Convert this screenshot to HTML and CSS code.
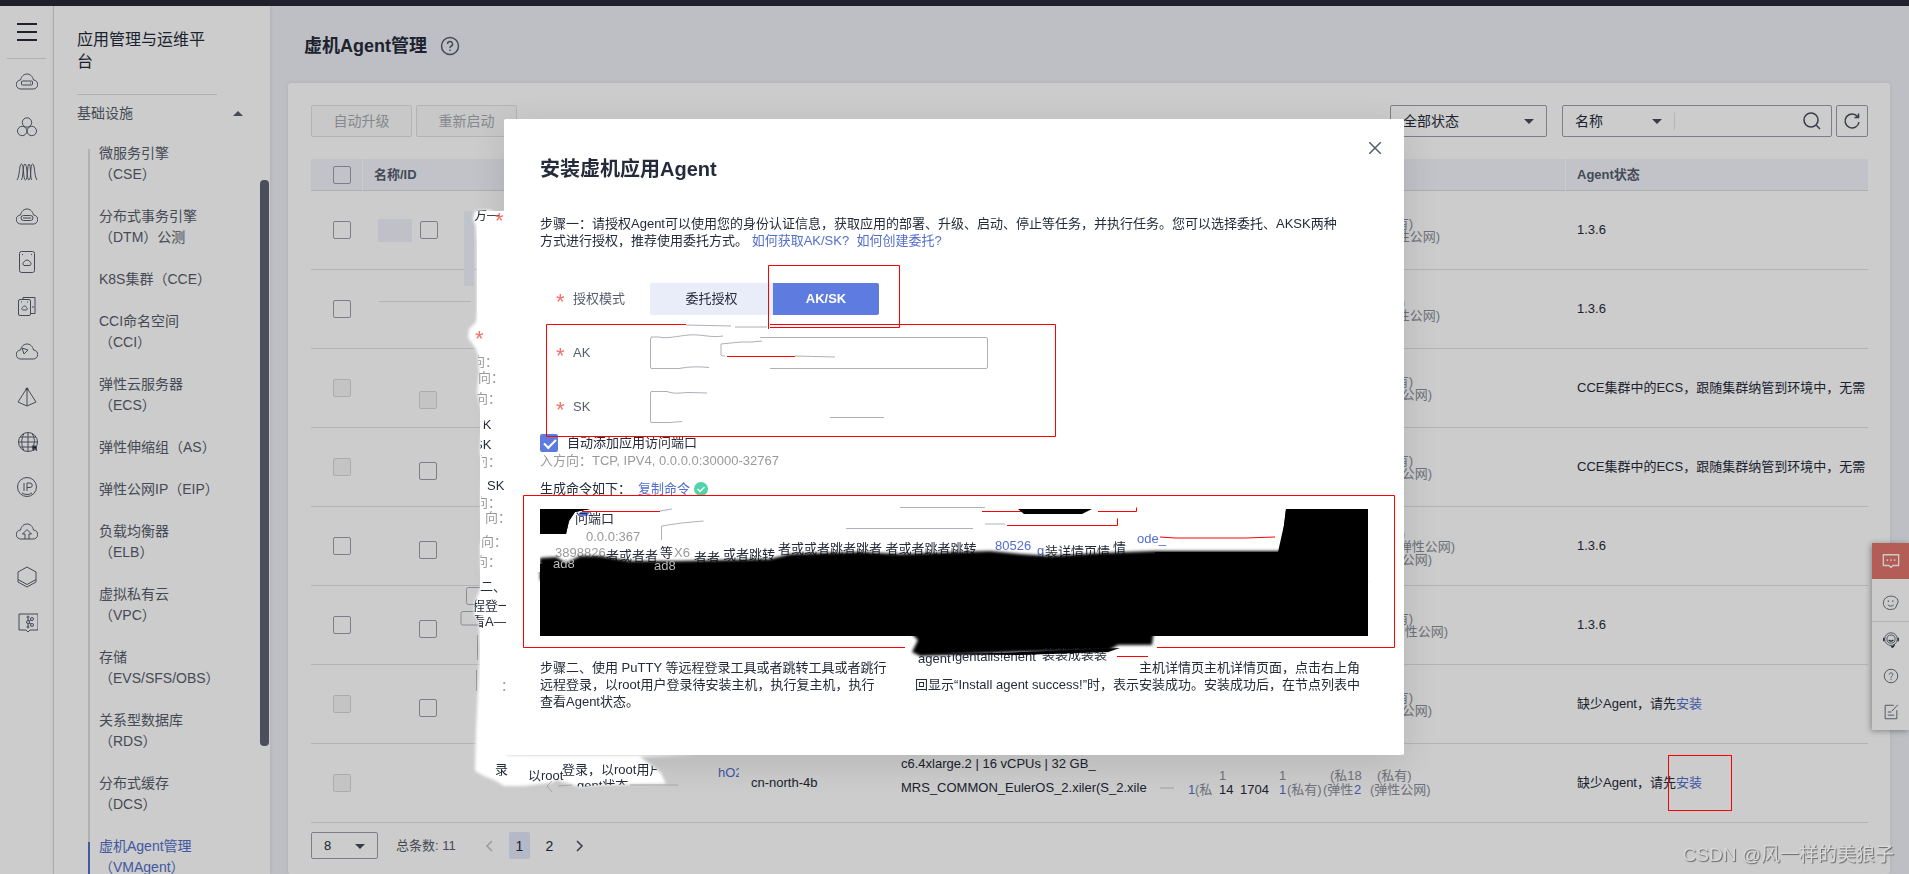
FILE: index.html
```html
<!DOCTYPE html>
<html lang="zh-CN">
  <head>
    <meta charset="UTF-8" />
    <meta name="viewport" content="width=device-width, initial-scale=1.0" />
    <title>虚机Agent管理</title>
    <link rel="stylesheet" href="styles.css">
  </head>
  <body>
    <div class="topbar"></div>
    <div class="app">
      <nav class="rail">
        <button class="menu-btn" aria-label="菜单">
          <svg width="20" height="18" viewBox="0 0 20 18"><path d="M0 1h20M0 9h20M0 17h20" stroke="#252b3a" stroke-width="2" /></svg>
        </button>
        <ul class="rail-list">
          <li><svg class="ico" viewBox="0 0 22 22"><path d="M5 18a4.500 4.500 0 0 1-.5-9C5.500 5 8 3 11 3s5.500 2 6.500 6a4.500 4.500 0 0 1-.5 9z" /><rect x="5.500" y="10" width="11" height="4" rx="1" /><path d="M14 12h1" /></svg></li>
          <li><svg class="ico" viewBox="0 0 22 22"><circle cx="11" cy="6.500" r="4.700" /><circle cx="6.200" cy="15" r="4.700" /><circle cx="15.800" cy="15" r="4.700" /></svg></li>
          <li><svg class="ico" viewBox="0 0 22 22"><path d="M1 19C4 15 3 3 5.500 3S7 19 9.500 19 11 3 13 3s1 16 3 16M5 19C7.500 19 6.500 3 9 3s1.500 16 4 16S14 3 16.500 3 18 15 21 19" /></svg></li>
          <li><svg class="ico" viewBox="0 0 22 22"><path d="M5 18a4.500 4.500 0 0 1-.5-9C5.500 5 8 3 11 3s5.500 2 6.500 6a4.500 4.500 0 0 1-.5 9z" /><rect x="5" y="9.500" width="12" height="5" rx="2.500" /><path d="M7 12h8" /></svg></li>
          <li><svg class="ico" viewBox="0 0 22 22"><rect x="3.500" y=".5" width="15" height="21" rx="2" /><path d="M8 14.500a2 2 0 0 1 0-3.500c1-2.500 5-2.500 6 0a2 2 0 0 1 0 3.500zM6 3.500h1M15 3.500h1" /></svg></li>
          <li><svg class="ico" viewBox="0 0 22 22"><rect x="2.500" y="3.500" width="12" height="16" rx="1.500" /><path d="M7 3V1.500h12v16h-4M6.500 14a1.500 1.500 0 0 1 0-2.500c1-2 3.500-2 4 0a1.500 1.500 0 0 1 0 2.500zM5 6h1M11 6h1M17 10v2" /></svg></li>
          <li><svg class="ico" viewBox="0 0 22 22"><path d="M5 18a4.500 4.500 0 0 1-.5-9C5.500 5 8 3 11 3s5.500 2 6.500 6a4.500 4.500 0 0 1-.5 9zM6 7l6 2-4 4z" /></svg></li>
          <li><svg class="ico" viewBox="0 0 22 22"><path d="M11 2L2 16l9 4 9-4zM11 2v18" /><circle cx="11" cy="3" r="1" fill="#252b3a" /></svg></li>
          <li><svg class="ico" viewBox="0 0 22 22"><circle cx="12" cy="11" r="9.500" /><path d="M12 1.500v19M2.500 11h19M4 6h16M4 16h13M8 2.500C5 8 5 14 8 19.500M16 2.500c3 5 3 10 1 13" /><path d="M16 15l1.500 5 1.500-3 1.500 3V15z" fill="#252b3a" /></svg></li>
          <li><svg class="ico" viewBox="0 0 22 22"><circle cx="11" cy="11" r="9.500" /><path d="M8 7v8M11 15V7h3a2 2 0 0 1 0 4.500h-3M6 17c3 2 7 2 10 0" /></svg></li>
          <li><svg class="ico" viewBox="0 0 22 22"><path d="M5 18a4.500 4.500 0 0 1-.5-9C5.500 5 8 3 11 3s5.500 2 6.500 6a4.500 4.500 0 0 1-.5 9zM9 18v-5H6.500L11 8.500l4.500 4.500H13v5" /></svg></li>
          <li><svg class="ico" viewBox="0 0 22 22"><path d="M11 1l9 5v10l-9 5-9-5V6zM2 13.500l9 5 9-5" /></svg></li>
          <li><svg class="ico" viewBox="0 0 22 22"><path d="M3 3h19v16h-8l-2 2-2-2H3z" /><circle cx="12" cy="11" r="1.500" /><circle cx="16" cy="8" r="1.500" /><circle cx="16" cy="14" r="1.500" /><circle cx="12" cy="6" r="1" /><circle cx="12" cy="16" r="1" /><path d="M12 7v2.500M13 10l2-1M13 12l2 1M12 12.500V15" /></svg></li>
        </ul>
      </nav>

      <aside class="sidebar">
        <h2 class="sidebar-title">应用管理与运维平台</h2>
        <button class="group">基础设施<span class="caret-up"></span></button>
        <ul class="nav-list">
          <li><a href="#">微服务引擎<br>（CSE）</a></li>
          <li><a href="#">分布式事务引擎<br>（DTM）公测</a></li>
          <li><a href="#">K8S集群（CCE）</a></li>
          <li><a href="#">CCI命名空间<br>（CCI）</a></li>
          <li><a href="#">弹性云服务器<br>（ECS）</a></li>
          <li><a href="#">弹性伸缩组（AS）</a></li>
          <li><a href="#">弹性公网IP（EIP）</a></li>
          <li><a href="#">负载均衡器<br>（ELB）</a></li>
          <li><a href="#">虚拟私有云<br>（VPC）</a></li>
          <li><a href="#">存储<br>（EVS/SFS/OBS）</a></li>
          <li><a href="#">关系型数据库<br>（RDS）</a></li>
          <li><a href="#">分布式缓存<br>（DCS）</a></li>
          <li class="active"><a href="#">虚机Agent管理<br>（VMAgent）</a></li>
        </ul>
        <div class="scroll-thumb"></div>
      </aside>

      <main class="main">
        <h1 class="page-title">虚机Agent管理
          <svg width="20" height="20" viewBox="0 0 20 20"><circle cx="10" cy="10" r="8.500" fill="none" stroke="#575d6c" stroke-width="1.500" /><path d="M7.500 8a2.500 2.500 0 1 1 3.500 2.300c-.7.300-1 .7-1 1.700M10 13.500v1.500" fill="none" stroke="#575d6c" stroke-width="1.500" /></svg>
        </h1>

        <section class="panel">
          <div class="toolbar">
            <button class="btn" disabled>自动升级</button>
            <button class="btn" disabled>重新启动</button>
            <span class="select state"><select aria-label="状态"><option>全部状态</option></select></span>
            <div class="search">
              <span class="select bare"><select aria-label="字段"><option>名称</option></select></span>
              <input type="text" aria-label="搜索">
              <svg width="18" height="18" viewBox="0 0 18 18"><circle cx="8" cy="8" r="7" /><path d="M13 13l4 4" /></svg>
            </div>
            <button class="refresh" aria-label="刷新">
              <svg width="18" height="18" viewBox="0 0 18 18"><path d="M14.500 4.500A7 7 0 1 0 16 10M15.500 1.500v4h-4" /></svg>
            </button>
          </div>

          <table class="grid">
            <colgroup><col class="c-check"><col class="c-name"><col class="c-zone"><col class="c-spec"><col><col class="c-agent"></colgroup>
            <thead>
              <tr>
                <th class="check"><input type="checkbox" aria-label="全选"></th>
                <th>名称/ID</th><th></th><th></th><th></th>
                <th class="split">Agent状态</th>
              </tr>
            </thead>
            <tbody>
              <tr>
                <td class="check"><input type="checkbox" aria-label="选择"></td>
                <td><div class="name"><i class="block"></i><input type="checkbox" aria-label="选择"></div></td><td></td><td></td>
                <td class="ips"><span class="e2">(私有)</span><span class="e4">(弹性公网)</span></td>
                <td>1.3.6</td>
              </tr>
              <tr>
                <td class="check"><input type="checkbox" aria-label="选择"></td>
                <td><div class="name"><i class="line"></i></div></td><td></td><td></td>
                <td class="ips"><span class="e1">(私有)</span><span class="e4">(弹性公网)</span></td>
                <td>1.3.6</td>
              </tr>
              <tr>
                <td class="check"><input type="checkbox" aria-label="选择" disabled></td>
                <td><div class="name low"><input type="checkbox" aria-label="选择" disabled></div></td><td></td><td></td>
                <td class="ips"><span class="e2">(私有)</span><span class="e3">(弹性公网)</span></td>
                <td>CCE集群中的ECS，跟随集群纳管到环境中，无需</td>
              </tr>
              <tr>
                <td class="check"><input type="checkbox" aria-label="选择" disabled></td>
                <td><div class="name mid"><input type="checkbox" aria-label="选择"></div></td><td></td><td></td>
                <td class="ips"><span class="e2">(私有)</span><span class="e3">(弹性公网)</span></td>
                <td>CCE集群中的ECS，跟随集群纳管到环境中，无需</td>
              </tr>
              <tr>
                <td class="check"><input type="checkbox" aria-label="选择"></td>
                <td><div class="name mid"><input type="checkbox" aria-label="选择"></div></td><td></td><td></td>
                <td class="ips"><span class="e1">(私有)</span><span class="e6">(弹性公网)</span><span class="e3">(弹性公网)</span></td>
                <td>1.3.6</td>
              </tr>
              <tr>
                <td class="check"><input type="checkbox" aria-label="选择"></td>
                <td><div class="name mid"><input type="checkbox" aria-label="选择"></div></td><td></td><td></td>
                <td class="ips"><span class="e2">(私有)</span><span class="e5">(弹性公网)</span></td>
                <td>1.3.6</td>
              </tr>
              <tr>
                <td class="check"><input type="checkbox" aria-label="选择" disabled></td>
                <td><div class="name mid"><input type="checkbox" aria-label="选择"></div></td><td></td><td></td>
                <td class="ips"><span class="e2">(私有)</span><span class="e3">(弹性公网)</span></td>
                <td>缺少Agent，请先<a href="#">安装</a></td>
              </tr>
              <tr>
                <td class="check"><input type="checkbox" aria-label="选择" disabled></td>
                <td class="host"><a href="#">hO2</a></td>
                <td>cn-north-4b</td>
                <td class="spec">c6.4xlarge.2 | 16 vCPUs | 32 GB_<br>MRS_COMMON_EulerOS_2.xiler(S_2.xile</td>
                <td class="frag">
                  <svg width="262" height="32" viewBox="1170 767 262 32">
                    <g><text x="1217" y="780">1</text><text x="1277" y="780">1</text><text x="1328" y="780">(私18</text><text x="1375" y="780">(私有)</text>
                    <text x="1193" y="794">(私</text><text x="1285" y="794">(私有)</text><text x="1321" y="794">(弹性</text><text x="1368" y="794">(弹性公网)</text></g>
                    <g class="dark"><text x="1217" y="794">14</text><text x="1238" y="794">1704</text></g>
                    <g class="blue"><text x="1186" y="794">1</text><text x="1277" y="794">1</text><text x="1352" y="794">2</text></g>
                    <path d="M1152 788h20" stroke="#c8c9cc" />
                  </svg>
                </td>
                <td class="marked">缺少Agent，请先<a href="#">安装</a><i class="redbox"></i></td>
              </tr>
            </tbody>
          </table>

          <div class="pager">
            <span class="select size"><select aria-label="每页条数"><option>8</option></select></span>
            <span class="total">总条数: 11</span>
            <button class="arrow off" aria-label="上一页"><svg width="8" height="12" viewBox="0 0 8 12"><path d="M7 1L2 6l5 5" /></svg></button>
            <button class="page on">1</button>
            <button class="page">2</button>
            <button class="arrow" aria-label="下一页"><svg width="8" height="12" viewBox="0 0 8 12"><path d="M1 1l5 5-5 5" /></svg></button>
          </div>
        </section>
      </main>
    </div>

    <div class="float-bar">
      <button class="hot" aria-label="反馈"><svg class="ico" viewBox="0 0 20 20"><path d="M1.500 3h17v12h-6L10 17l-2.500-2h-6zM6 8v2M10 8v2M14 8v2" /></svg></button>
      <button class="smile" aria-label="评价"><svg class="ico" viewBox="0 0 20 20"><path d="M17 5.500l1 3-3 7c-2 2-8 2.500-11 0s-3.500-8 0-11 10-3 13 1zM7 7v2M12 7v2M6.500 12c2 2 4.500 2 6.500 0" /></svg></button>
      <button aria-label="客服"><svg class="ico" viewBox="0 0 20 20"><circle cx="10" cy="9" r="7" /><circle cx="10" cy="9" r="4.500" /><path d="M7.500 10c1.500 1.500 3.500 1.500 5 0M2 7.500v4M18 7.500v4M10 17l2 1 2-3" stroke="#252b3a" stroke-width="1.500" /></svg></button>
      <button aria-label="帮助"><svg class="ico" viewBox="0 0 20 20"><circle cx="10" cy="10" r="7.500" /><path d="M8 8.500c0-3 4.500-2.500 4 0-.3 1.500-2 1.500-2 3.500M10 13v1.500" /></svg></button>
      <button aria-label="建议"><svg class="ico" viewBox="0 0 20 20"><path d="M13 2.500H3.500v15h13V8M6.500 10h4M6.500 13.500h7M11 9l6.500-7" /></svg></button>
    </div>

    <div class="overlay">
      <div class="modal" role="dialog" aria-labelledby="dlgTitle">
        <button class="close" aria-label="关闭"><svg width="12" height="12" viewBox="0 0 12 12"><path d="M0 0l12 12M12 0L0 12" stroke="#575d6c" stroke-width="1.500" /></svg></button>
        <h2 class="modal-title" id="dlgTitle">安装虚机应用Agent</h2>
        <p class="step">步骤一：请授权Agent可以使用您的身份认证信息，获取应用的部署、升级、启动、停止等任务，并执行任务。您可以选择委托、AKSK两种<br>方式进行授权，推荐使用委托方式。 <a href="#">如何获取AK/SK?</a>&nbsp; <a href="#">如何创建委托?</a></p>

        <form class="form">
          <div class="field">
            <span class="req">*</span><span class="label">授权模式</span>
            <button type="button" class="seg">委托授权</button><button type="button" class="seg on">AK/SK</button>
          </div>
          <div class="field">
            <span class="req">*</span><label class="label" for="ak">AK</label>
            <input class="text" id="ak" type="text">
          </div>
          <div class="field">
            <span class="req">*</span><label class="label" for="sk">SK</label>
            <input class="text" id="sk" type="text">
          </div>
          <div class="port"><input type="checkbox" id="port" checked><label for="port">自动添加应用访问端口</label></div>
          <p class="hint">入方向：TCP, IPV4, 0.0.0.0:30000-32767</p>
          <div class="copy">生成命令如下：<a href="#">复制命令</a>
            <svg width="14" height="14" viewBox="0 0 14 14"><circle cx="7" cy="7" r="7" fill="#50d4ab" /><path d="M3.500 7l2.500 2.500L10.500 5" fill="none" stroke="#fff" stroke-width="1.500" /></svg>
          </div>
          <div class="command"></div>
        </form>

        <div class="step two">
          <div class="split-line"><span>步骤二、使用 PuTTY 等远程登录工具或者跳转工具或者跳行</span><span>主机详情页主机详情页面，点击右上角</span></div>
          <div class="split-line"><span>远程登录，以root用户登录待安装主机，执行复主机，执行</span><span>回显示“Install agent success!”时，表示安装成功。安装成功后，在节点列表中</span></div>
          <div>查看Agent状态。</div>
        </div>

        <!-- smudges and red marks drawn over the dialog -->
        <svg class="marks" viewBox="504 119 900 636">
          <defs>
            <filter id="soft" x="-10%" y="-10%" width="120%" height="120%"><feGaussianBlur stdDeviation="1.500" /></filter>
            <path id="blob" d="M506 211L498 215L490 210L475 211L473 219L476 226L477 245V310L476 322L469 329L468 338L474 346L478 354L479 372L477 392L481 408L485 418L481 438L480 452L484 464L482 484L481 498L482 520L485 532L480 546L481 568L483 582L479 592L475 602L474 614L479 622L480 650L478 690L476 730L475 771L484 776L496 781L504 786L524 786L540 784L552 783L556 780L580 787L600 785L666 784L661 773L650 764L640 757L700 755H506Z" />
            <clipPath id="inBlob"><use href="#blob" /></clipPath>
            <clipPath id="scrubbed"><path d="M540 505H1290V580H540Z" /></clipPath>
          </defs>
          <g fill="none" stroke="#8a8c94"><rect x="466.500" y="587.500" width="17" height="17" rx="2" /><path d="M484 611.500H463a2 2 0 0 0-2 2V623a2 2 0 0 0 2 2h21M477.500 635v25M476.500 670v21" /></g>
          <path d="M464 211h10v75h-10z" fill="#c1c3cb" />
          <use href="#blob" fill="#fff" filter="url(#soft)" />
          <path d="M506 211H477V310L480 345V770L506 776Z" fill="#fff" />
          <g clip-path="url(#inBlob)">
            <g class="g">
              <text x="472" y="366">向：</text><text x="478" y="382">向：</text><text x="475" y="403">向：</text><text x="475" y="466">向：</text><text x="475" y="507">向：</text><text x="485" y="522">向：</text><text x="481" y="546">向：</text><text x="475" y="566">向：</text><text x="501" y="690">：</text>
            </g>
            <g class="d">
              <text x="474" y="429">SK</text><text x="474" y="449">SK</text><text x="487" y="490">SK</text>
              <text x="480" y="591">二、</text><text x="472" y="610">程登一</text><text x="472" y="626">看A—</text>
              <text x="474" y="219">方—</text><text x="495" y="774">录</text><text x="528" y="780">以root</text><text x="562" y="774">登录，以root用户</text><text x="577" y="790">gent状态</text>
            </g>
            <text class="r" x="475" y="346">*</text>
          </g>
          <text class="r" x="495" y="228">*</text>
          <path d="M552 781l-5 5 5 6M558 786l14-1M630 785h48" fill="none" stroke="#a5a6ab" />

          <g fill="none" stroke="#f00">
            <path d="M768.500 329V265.500H899.500V327.500H770" />
            <path d="M686 324.500H546.500V436.500H1055.500V324.500H770" />
            <path d="M905 647.500H523.500V495.500H1394.500V647.500H1157" />
          </g>
          <!-- field borders rubbed out by hand -->
          <path d="M652 336h32v2h-32zM684 335h76v4h-76zM652 367h32v3h-32zM684 366h86v4h-86zM652 389h342v36H652z" fill="#fff" />
          <path d="M651 337h8c8 2 18-1 30-2s22 3 34 1M651 368.500h28c10-2 20-2 30-1M686 325l45 1M735 327h32M762 341l-10 1H741l-20 2v11q0 1 4 1M795 356l40 1M651 391.500h16c8 3 14 1 22 1l18 .500M651 422.500h18l13-1M830 417.500h54" fill="none" stroke="#adb0b8" />
          <path d="M727 356.500h68" stroke="#f00" />

          <path d="M590 509H1286L1284 525L1278 552L1290 570H540V534H566L569 521L575 512Z" fill="#fff" />
          <g clip-path="url(#scrubbed)">
            <path d="M580 512h10l-3 4h-9z" fill="#5e7ce0" />
            <g class="d"><text x="575" y="523">问端口</text>
            <text x="606" y="560">者或者者</text><text x="660" y="557">等</text><text x="694" y="562">者者</text><text x="723" y="559">或者跳转</text><text x="778" y="553">者或或者跳者跳者 者或者跳者跳转</text><text x="1045" y="556">装详情页情</text><text x="1113" y="552">情</text></g>
            <g class="g"><text x="586" y="541">0.0.0:367</text><text x="555" y="557">3898826</text><text x="674" y="557">X6</text></g>
            <g class="b"><text x="995" y="550">80526</text><text x="1137" y="543">ode_</text><text x="1037" y="555">g</text></g>
          </g>
          <g fill="none" stroke="#f00"><path d="M582 511.500h78M982 511.500h40M1098 511.500h38.500v-4M1007 525.500h110.500v-7M1160 537l15 1h70l30-1M1117 656.500h31" /></g>
          <g fill="none" stroke="#b0b2bb"><path d="M660 511l12-2M661.500 540V526l20-3 22-2M900 507.500h85M846 528.500h127M985 524h20" /></g>
          <path d="M540 558L556 557L566 563L580 556L600 556L630 561L680 561L770 559L790 554L860 552L900 554L990 551L1020 554L1050 556L1100 553L1155 551H1368V580H540Z" fill="#000" filter="url(#soft)" />
          <path d="M540 564H1368V636H540ZM1286 509H1368V600H1275ZM540 509H590L575 512L569 521L566 534H540ZM1018 509H1092L1082 514H1024ZM1155 552H1300V570H1155Z" fill="#000" />
          <path d="M908 630H1154L1152 645H1118L1108 651L1020 652L920 656L912 652L918 640Z" fill="#000" filter="url(#soft)" />
          <path d="M524 548h16v24h-16zM1368 545h16v36h-16z" fill="#fff" />
          <g class="w"><text x="553" y="568">ad8</text><text x="654" y="570">ad8</text></g>
          <g class="d"><text x="918" y="663">agent</text><text x="952" y="661">igentalls!enent</text><text x="1042" y="659">装装成装装</text></g>
          <path d="M918 654L1000 653L1120 648L1108 652L1020 655Z" fill="#000" />
        </svg>
      </div>
    </div>
    <div class="watermark">CSDN @风一样的美狼子</div>
  </body>
</html>
```
FILE: styles.css
```css
* {
  box-sizing: border-box;
}

body {
  margin: 0;
  height: 100vh;
  overflow: hidden;
  display: flex;
  flex-direction: column;
  font-family: "Liberation Sans", "Noto Sans CJK SC", sans-serif;
  font-size: 13px;
  line-height: 18px;
  color: #252b3a;
  background: #edeff6;
}

ul, h1, h2, p {
  margin: 0;
  padding: 0;
  list-style: none;
}

button, input, select {
  font: inherit;
  color: inherit;
  margin: 0;
}

button {
  padding: 0;
  border: 0;
  background: none;
}

a {
  color: #526ecc;
  text-decoration: none;
}

.topbar {
  height: 6px;
  flex: none;
  background: #272936;
}

.app {
  display: flex;
  flex: 1;
  min-height: 0;
}

.ico {
  width: 22px;
  height: 22px;
  fill: none;
  stroke: #575d6c;
}

/* icon rail */
.rail {
  width: 54px;
  flex: none;
  background: #fff;
  border-right: 1px solid #dcdde3;
}

.menu-btn {
  display: flex;
  align-items: center;
  justify-content: center;
  width: 39px;
  height: 53px;
  margin: 0 7px;
  border-bottom: 1px solid #dcdde3;
}

.rail-list li {
  display: flex;
  align-items: center;
  justify-content: center;
  height: 45px;
}

/* sidebar */
.sidebar {
  position: relative;
  width: 216px;
  flex: none;
  overflow: hidden;
  padding: 23px 23px 0;
  background: #fff;
  box-shadow: 0 0 4px rgba(0, 0, 0, 0.1);
}

.sidebar-title {
  width: 140px;
  height: 66px;
  border-bottom: 1px solid #dcdde3;
  font-size: 16px;
  font-weight: 400;
  line-height: 22px;
}

.group {
  display: flex;
  align-items: center;
  justify-content: space-between;
  width: 100%;
  height: 36px;
  padding-right: 4px;
  font-size: 14px;
  color: #575d6c;
}

.caret-up {
  border: 5px solid transparent;
  border-top: 0;
  border-bottom-color: #575d6c;
}

.nav-list {
  margin: 18px 0 0 11px;
}

.nav-list li {
  padding: 0 0 21px 9px;
  border-left: 2px solid #dcdde3;
  font-size: 14px;
  line-height: 21px;
  white-space: nowrap;
}

.nav-list a {
  position: relative;
  top: -6px;
  color: #575d6c;
}

.nav-list .active {
  border-color: #526ecc;
}

.nav-list .active a {
  color: #526ecc;
}

.scroll-thumb {
  position: absolute;
  top: 174px;
  right: 1px;
  width: 9px;
  height: 566px;
  border-radius: 4px;
  background: #5e6373;
}

/* main */
.main {
  flex: 1;
  min-width: 0;
  display: flex;
  flex-direction: column;
  padding: 0 19px 0 18px;
}

.page-title {
  display: flex;
  align-items: center;
  gap: 13px;
  height: 77px;
  flex: none;
  padding: 3px 0 0 16px;
  font-size: 18px;
}

.panel {
  flex: 1;
  padding: 22px 22px 0 23px;
  border-radius: 3px;
  background: #fff;
  box-shadow: 0 0 4px rgba(0, 0, 0, 0.08);
}

.toolbar {
  display: flex;
  gap: 4px;
  height: 32px;
  margin-bottom: 22px;
  font-size: 14px;
}

.btn {
  width: 101px;
  border: 1px solid #dfe1e6;
  border-radius: 2px;
  background: #fafafa;
  color: #a8abb4;
}

.select {
  position: relative;
  border: 1px solid #9b9eab;
  border-radius: 2px;
}

.select::after {
  content: "";
  position: absolute;
  right: 12px;
  top: 50%;
  margin-top: -2px;
  border: 5px solid transparent;
  border-bottom: 0;
  border-top-color: #464c5b;
}

.select select {
  appearance: none;
  width: 100%;
  height: 100%;
  padding: 0 12px;
  border: 0;
  background: none;
}

.state {
  width: 157px;
  margin-left: auto;
}

.search {
  display: flex;
  align-items: center;
  width: 270px;
  margin-left: 11px;
  padding-right: 10px;
  border: 1px solid #9b9eab;
  border-radius: 2px;
}

.bare {
  width: 112px;
  border: 0;
  border-right: 1px solid #dfe1e6;
}

.search input {
  flex: 1;
  min-width: 0;
  border: 0;
  background: none;
}

.search svg,
.refresh svg {
  fill: none;
  stroke: #464c5b;
  stroke-width: 1.5;
}

.refresh {
  display: flex;
  align-items: center;
  justify-content: center;
  width: 32px;
  border: 1px solid #9b9eab;
  border-radius: 2px;
}

/* table */
input[type="checkbox"] {
  appearance: none;
  display: block;
  width: 18px;
  height: 18px;
  flex: none;
  border: 1px solid #9b9eab;
  border-radius: 2px;
}

input[type="checkbox"]:disabled {
  border-color: #d5d7dd;
  background: #f5f5f6;
}

.grid {
  width: 100%;
  table-layout: fixed;
  border-collapse: separate;
  border-spacing: 0;
}

.c-check { width: 52px; }
.c-name { width: 376px; }
.c-zone { width: 150px; }
.c-spec { width: 271px; }
.c-agent { width: 303px; }

.grid th {
  height: 32px;
  padding: 0 0 0 11px;
  border-bottom: 1px solid #d9dbe2;
  background: #f2f4fc;
  color: #575d6c;
  text-align: left;
}

.grid td {
  height: 79px;
  padding: 0 0 0 12px;
  border-bottom: 1px solid #dfe1e6;
  overflow: hidden;
  white-space: nowrap;
}

.grid .check {
  padding-left: 22px;
}

.grid th.check {
  border-right: 1px solid #fff;
}

.grid .split {
  border-left: 1px solid #fff;
}

.name {
  display: flex;
  align-items: center;
  padding-left: 44px;
}

.mid {
  padding-top: 8px;
}

.low {
  padding-top: 24px;
}

.block {
  width: 34px;
  height: 23px;
  margin: 0 8px 0 -41px;
  background: #f0f2fa;
}

.line {
  width: 92px;
  height: 1px;
  margin: -16px 0 0 -40px;
  background: #dfe1e6;
}

.grid .ips {
  color: #8a8e99;
  line-height: 13px;
}

.ips span {
  display: block;
  text-align: right;
}

.e1 { width: 233px; }
.e2 { width: 241px; }
.e3 { width: 260px; }
.e4 { width: 268px; }
.e5 { width: 276px; }
.e6 { width: 283px; }

.grid .host {
  padding: 0 0 20px 355px;
}

.grid .spec {
  padding-bottom: 14px;
  overflow: visible;
  line-height: 24px;
}

.frag svg {
  display: block;
  overflow: visible;
  fill: #8a8e99;
}

.frag .dark { fill: #252b3a; }
.frag .blue { fill: #526ecc; }

.grid .marked {
  position: relative;
  overflow: visible;
}

.redbox {
  position: absolute;
  z-index: 20;
  top: 11px;
  left: 103px;
  width: 64px;
  height: 56px;
  border: 1px solid #f00;
}

.pager {
  display: flex;
  align-items: center;
  height: 27px;
  margin-top: 9px;
}

.size {
  width: 67px;
  height: 27px;
}

.total {
  width: 82px;
  margin-left: 18px;
  color: #575d6c;
}

.page {
  width: 21px;
  height: 27px;
  margin-right: 9px;
  border-radius: 2px;
  font-size: 14px;
}

.page.on {
  background: #e3e8f9;
}

.arrow {
  width: 22px;
  margin: 0 9px 0 0;
}

.arrow svg {
  display: block;
  margin: auto;
  fill: none;
  stroke: #464c5b;
  stroke-width: 1.5;
}

.arrow.off svg {
  stroke: #c0c2c9;
}

/* right hand buttons */
.float-bar {
  position: absolute;
  top: 543px;
  right: 0;
  width: 37px;
  background: #fff;
  box-shadow: -1px 1px 6px rgba(0, 0, 0, 0.35);
}

.float-bar button {
  display: flex;
  align-items: center;
  justify-content: center;
  width: 37px;
  height: 36px;
}

.float-bar .ico {
  width: 18px;
  height: 18px;
}

.float-bar .hot {
  background: #e2736c;
}

.float-bar .hot .ico {
  stroke: #fff;
  stroke-width: 1.5;
}

.float-bar .smile {
  height: 43px;
  padding-top: 5px;
  border-bottom: 1px solid #dfe1e6;
}

/* dialog */
.overlay {
  position: fixed;
  inset: 0;
  z-index: 10;
  display: flex;
  align-items: center;
  justify-content: center;
  padding-right: 1px;
  background: rgba(0, 0, 0, 0.2);
}

.modal {
  position: relative;
  width: 900px;
  padding: 36px 36px 45px;
  border-radius: 2px;
  background: #fff;
  box-shadow: 0 8px 40px rgba(0, 0, 0, 0.12);
}

.close {
  position: absolute;
  top: 23px;
  right: 23px;
  width: 12px;
  height: 12px;
}

.close svg {
  display: block;
}

.modal-title {
  margin-bottom: 32px;
  font-size: 20px;
  line-height: 28px;
}

.step {
  line-height: 17px;
  white-space: nowrap;
}

.form {
  margin: 34px 0 23px;
}

.field {
  display: flex;
  align-items: center;
  height: 32px;
  margin-bottom: 22px;
}

.req {
  width: 17px;
  height: 16px;
  margin-left: 16px;
  color: #f66f6a;
  font-size: 22px;
  line-height: 22px;
}

.label {
  width: 77px;
  color: #575d6c;
}

.seg {
  width: 123px;
  height: 32px;
  border-radius: 2px 0 0 2px;
  background: #e9edfa;
}

.seg.on {
  width: 106px;
  border-radius: 0 2px 2px 0;
  background: #5e7ce0;
  color: #fff;
  font-weight: 700;
}

.text {
  width: 338px;
  height: 32px;
  padding: 0 10px;
  border: 1px solid #adb0b8;
  border-radius: 2px;
}

.port {
  display: flex;
  align-items: center;
  gap: 9px;
  height: 18px;
  margin-top: -11px;
}

.port input[type="checkbox"] {
  border: 0;
  background: #5e7ce0;
}

.port input::after {
  content: "";
  display: block;
  width: 10px;
  height: 5px;
  margin: 5px 4px;
  border: solid #fff;
  border-width: 0 0 2px 2px;
  transform: rotate(-45deg);
}

.hint {
  color: #999;
  line-height: 17px;
}

.copy {
  display: flex;
  align-items: center;
  gap: 4px;
  height: 18px;
  margin: 11px 0;
}

.copy a {
  margin-left: 3px;
}

.command {
  height: 127px;
  background: #000;
}

.split-line {
  display: flex;
  justify-content: space-between;
  padding-right: 8px;
}

.marks {
  position: absolute;
  top: 0;
  left: 0;
  width: 900px;
  height: 636px;
  overflow: visible;
  pointer-events: none;
}

.marks .d { fill: #252b3a; }
.marks .g { fill: #999; }
.marks .b { fill: #526ecc; }
.marks .w { fill: #bbb; }

.marks .r {
  fill: #f66f6a;
  font-size: 22px;
}

.watermark {
  position: fixed;
  z-index: 30;
  right: 15px;
  bottom: 5px;
  color: #d8d8da;
  font-size: 19px;
  line-height: 28px;
  text-shadow: 1px 1px 1px #666;
}
```
